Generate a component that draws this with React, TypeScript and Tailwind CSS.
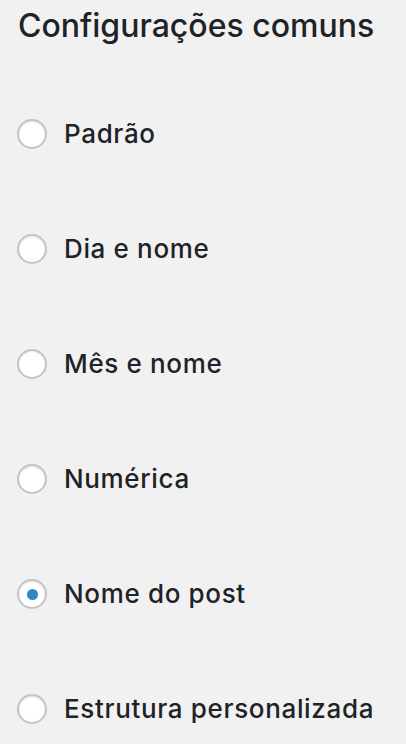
import React from "react";

const options = [
  { label: "Padrão", checked: false },
  { label: "Dia e nome", checked: false },
  { label: "Mês e nome", checked: false },
  { label: "Numérica", checked: false },
  { label: "Nome do post", checked: true },
  { label: "Estrutura personalizada", checked: false },
];

const Radio = ({ checked }: { checked: boolean }) => (
  <span className="flex items-center justify-center w-[30px] h-[30px] shrink-0 rounded-full bg-white border-2 border-[#c3c4c7] shadow-[inset_0_1px_2px_rgba(0,0,0,0.1)]">
    {checked && <span className="w-[11px] h-[11px] rounded-full bg-[#2f86c4]" />}
  </span>
);

const App = () => {
  return (
    <div
      className="w-[406px] h-[744px] bg-[#f1f1f1] text-[#1d2327] overflow-hidden"
      style={{ fontFamily: "Inter, 'Noto Sans', sans-serif" }}
    >
      <h1 className="pl-[18px] pt-[4px] text-[32px] leading-[44px] font-medium">
        Configurações comuns
      </h1>
      <div className="flex flex-col pt-[71px] gap-[85px]">
        {options.map((o) => (
          <label key={o.label} className="flex items-center pl-[17px] gap-[17px] h-[30px]">
            <Radio checked={o.checked} />
            <span className="text-[26px] font-medium leading-[30px] tracking-[0.65px]">{o.label}</span>
          </label>
        ))}
      </div>
    </div>
  );
};

export default App;
